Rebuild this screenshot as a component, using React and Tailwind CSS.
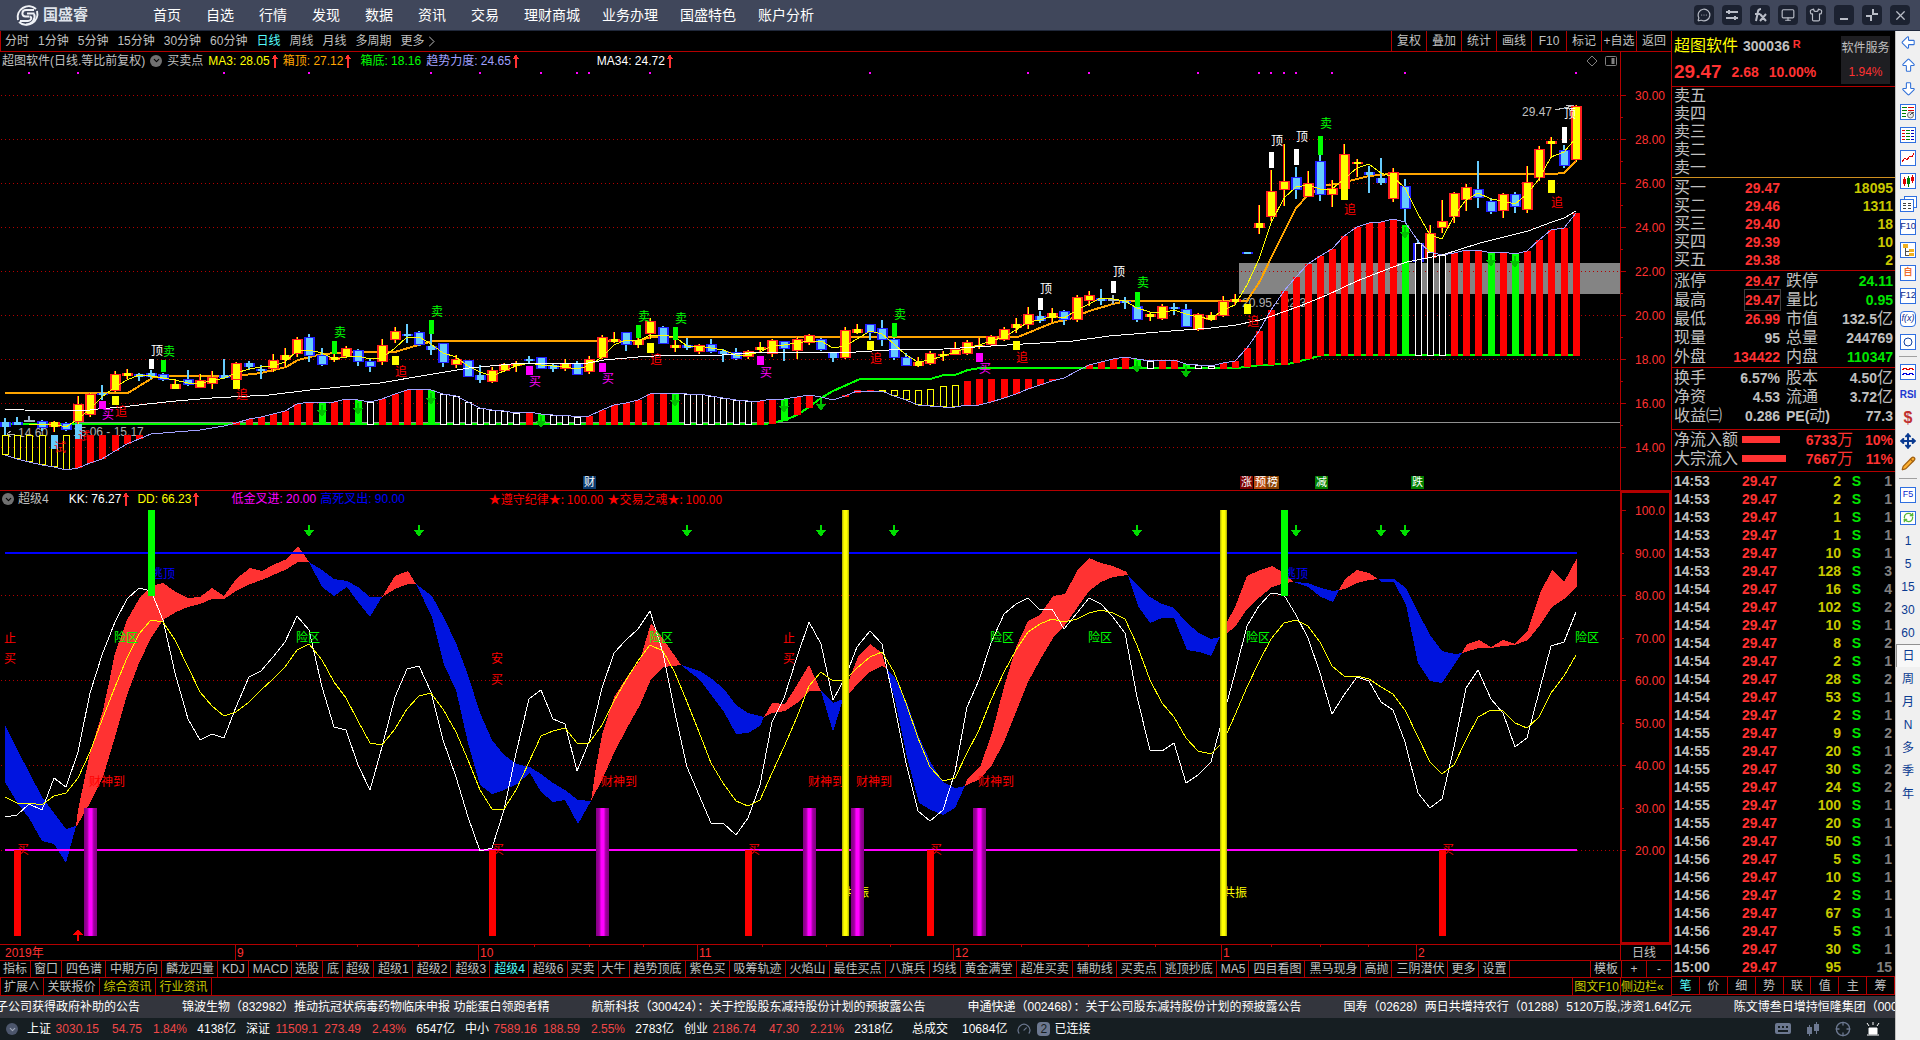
import React from 'react';
import {
  ArrowBigDown,
  ArrowBigLeft,
  ArrowBigUp,
  ChevronDown,
  ChevronRight,
  Crosshair,
  Gauge,
  MessageCircleMore,
  Monitor,
  Move,
  Pencil,
  RefreshCw,
  Shirt,
  X,
} from 'lucide-react';

const FONT = "font-['Liberation_Sans','Noto_Sans_CJK_SC',sans-serif]";
const STEP = 12.177;
const cx = (i) => Math.floor(5.5 + STEP * i);

// [kind, high, body top, body bottom, low]; r = up, b = down, g = flat
const CANDLES = [
  ['b', 418, 422, 427, 435], ['b', 417, 422, 425, 425], ['g', 416, 420, 421, 422], ['b', 420, 421, 428, 431],
  ['r', 421, 422, 427, 432], ['b', 422, 423, 430, 431], ['r', 396, 404, 422, 433], ['r', 393, 394, 415, 417],
  ['b', 385, 393, 394, 400], ['r', 371, 374, 391, 392], ['r', 369, 373, 376, 379], ['b', 373, 374, 377, 381],
  ['b', 370, 373, 377, 379], ['b', 373, 374, 380, 381], ['r', 379, 384, 389, 389], ['b', 370, 379, 385, 386],
  ['r', 374, 380, 388, 388], ['r', 371, 377, 384, 389], ['b', 359, 375, 378, 379], ['r', 362, 363, 380, 381],
  ['b', 361, 363, 367, 370], ['b', 365, 369, 371, 379], ['r', 354, 360, 369, 372], ['r', 348, 355, 360, 367],
  ['r', 337, 339, 354, 357], ['b', 334, 337, 356, 362], ['b', 348, 355, 365, 366], ['r', 354, 357, 360, 362],
  ['r', 346, 348, 357, 358], ['b', 349, 350, 362, 366], ['b', 359, 361, 367, 372], ['r', 339, 345, 362, 365],
  ['r', 327, 331, 340, 343], ['b', 324, 334, 336, 343], ['b', 331, 332, 345, 346], ['b', 334, 346, 350, 355],
  ['b', 343, 343, 363, 367], ['r', 355, 359, 365, 368], ['b', 360, 360, 377, 377], ['b', 365, 375, 380, 383],
  ['r', 367, 370, 382, 383], ['r', 363, 364, 371, 372], ['r', 361, 364, 366, 372], ['b', 356, 359, 361, 363],
  ['b', 357, 357, 369, 369], ['b', 363, 365, 369, 372], ['r', 359, 363, 369, 371], ['b', 361, 363, 375, 375],
  ['r', 356, 359, 372, 374], ['r', 335, 337, 358, 359], ['r', 332, 339, 342, 343], ['b', 332, 332, 345, 351],
  ['r', 338, 340, 345, 348], ['r', 318, 321, 334, 339], ['b', 326, 327, 344, 344], ['r', 338, 345, 348, 352],
  ['b', 338, 345, 348, 350], ['r', 344, 345, 352, 354], ['b', 339, 344, 352, 353], ['b', 349, 351, 354, 362],
  ['b', 348, 352, 359, 360], ['r', 350, 351, 357, 359], ['r', 342, 347, 350, 353], ['r', 339, 340, 354, 357],
  ['b', 341, 341, 349, 361], ['r', 337, 339, 351, 359], ['r', 334, 335, 343, 345], ['b', 338, 339, 350, 351],
  ['b', 352, 353, 358, 362], ['r', 327, 330, 358, 359], ['r', 324, 329, 333, 334], ['b', 324, 324, 333, 340],
  ['b', 320, 328, 340, 346], ['b', 338, 339, 358, 360], ['b', 353, 357, 366, 366], ['r', 357, 362, 366, 367],
  ['r', 351, 353, 364, 365], ['r', 351, 354, 355, 361], ['r', 342, 349, 355, 355], ['r', 340, 342, 354, 355],
  ['r', 338, 345, 347, 349], ['r', 335, 336, 345, 346], ['r', 327, 329, 340, 341], ['r', 318, 324, 328, 333],
  ['r', 307, 314, 325, 329], ['b', 311, 316, 321, 323], ['r', 308, 313, 318, 322], ['b', 310, 311, 320, 325],
  ['r', 295, 297, 320, 322], ['r', 291, 295, 301, 306], ['b', 289, 298, 301, 305], ['g', 295, 299, 301, 304],
  ['b', 297, 301, 302, 309], ['b', 305, 306, 320, 322], ['r', 312, 314, 317, 321], ['r', 304, 306, 319, 320],
  ['b', 303, 307, 309, 315], ['b', 304, 309, 327, 327], ['r', 313, 314, 330, 331], ['r', 312, 315, 320, 321],
  ['r', 296, 301, 316, 317], ['r', 294, 299, 302, 305], ['b', 252, 252, 254, 254], ['r', 205, 223, 228, 234],
  ['r', 170, 191, 217, 221], ['r', 144, 181, 190, 206], ['b', 167, 177, 190, 199], ['r', 171, 183, 197, 197],
  ['b', 155, 161, 195, 201], ['r', 180, 188, 195, 207], ['r', 144, 154, 189, 190], ['r', 159, 162, 164, 177],
  ['b', 166, 172, 175, 193], ['b', 158, 178, 183, 185], ['r', 168, 172, 199, 202], ['b', 179, 186, 209, 222],
  ['b', 240, 243, 262, 263], ['r', 225, 233, 258, 259], ['r', 200, 221, 228, 233], ['r', 192, 193, 217, 223],
  ['r', 184, 187, 200, 211], ['b', 161, 189, 198, 208], ['b', 198, 201, 212, 214], ['r', 193, 194, 211, 218],
  ['b', 192, 194, 207, 213], ['r', 166, 182, 210, 213], ['r', 146, 149, 178, 181], ['r', 137, 141, 144, 158],
  ['b', 145, 150, 166, 168], ['r', 105, 106, 160, 162],
];

// [first index, kind, [top, bottom] ...]; r = red, g = green, w = white outline, y = yellow outline
const HIST = [
  [0, 'y', [435, 455], [435, 459], [435, 462], [435, 465], [435, 467], [435, 470]],
  [6, 'r', [435, 468], [435, 463], [435, 459], [435, 451], [435, 444], [435, 439]],
  [19, 'r', [422, 425], [419, 425], [417, 425], [414, 425], [411, 425], [404, 425], [402, 425]],
  [26, 'g', [403, 425]],
  [27, 'r', [402, 425], [399, 425]],
  [29, 'g', [400, 425]],
  [30, 'w', [402, 425]],
  [31, 'r', [399, 425], [394, 425], [390, 425], [389, 425]],
  [35, 'g', [390, 425]],
  [36, 'w', [394, 425], [396, 425], [402, 425], [408, 425], [410, 425], [411, 425], [413, 425]],
  [43, 'r', [412, 425]],
  [44, 'g', [414, 425]],
  [45, 'w', [415, 425], [415, 425], [417, 425]],
  [48, 'r', [416, 425], [410, 425], [405, 425], [403, 425], [400, 425], [394, 425], [393, 425]],
  [55, 'g', [393, 425]],
  [56, 'w', [394, 425], [394, 425], [396, 425], [398, 425], [400, 425], [401, 425]],
  [62, 'r', [401, 425], [399, 424]],
  [64, 'g', [399, 421]],
  [65, 'r', [397, 415], [395, 408]],
  [69, 'r', [395, 397], [390, 393], [390, 392]],
  [72, 'y', [390, 392], [390, 396], [390, 400], [390, 405], [389, 406], [386, 407], [385, 407]],
  [79, 'r', [381, 405], [379, 405], [379, 402], [379, 398], [379, 394], [379, 389], [379, 385], [379, 381]],
  [89, 'r', [365, 369], [362, 369], [359, 369], [357, 369]],
  [93, 'g', [359, 369]],
  [94, 'w', [361, 369]],
  [95, 'r', [360, 369], [360, 369]],
  [97, 'g', [364, 369]],
  [98, 'w', [365, 369], [366, 369]],
  [100, 'r', [363, 369], [361, 368], [348, 367], [331, 365], [310, 365], [291, 365], [277, 363], [264, 359],
    [256, 356], [249, 356], [236, 356], [227, 356], [223, 356], [222, 356], [219, 356]],
  [115, 'g', [225, 356]],
  [116, 'w', [243, 356], [252, 356], [255, 356]],
  [119, 'r', [253, 356], [250, 356], [250, 356]],
  [122, 'g', [253, 356]],
  [123, 'r', [252, 356]],
  [124, 'g', [254, 356]],
  [125, 'r', [251, 356], [240, 356], [230, 356], [228, 356], [213, 356]],
];

const FORCE = [
  455, 459, 462, 465, 467, 470, 468, 463, 459, 451, 444, 439, 434, 433, 432, 431, 430, 428, 426, 423,
  419, 417, 414, 411, 404, 402, 403, 402, 399, 400, 402, 399, 394, 390, 389, 390, 394, 396, 402, 408,
  410, 411, 413, 412, 414, 415, 415, 417, 416, 410, 405, 403, 400, 394, 393, 393, 394, 394, 396, 398,
  400, 401, 401, 399, 399, 397, 395, 397, 400, 396, 391, 391, 391, 396, 400, 405, 406, 407, 407, 405,
  405, 402, 398, 394, 389, 385, 381, 378, 371, 365, 362, 359, 357, 359, 361, 360, 360, 364, 365, 366,
  363, 361, 348, 331, 310, 291, 277, 264, 256, 249, 236, 227, 223, 222, 219, 222, 241, 252, 255, 253,
  250, 250, 253, 252, 254, 251, 240, 230, 228, 213,
];

const KK = [
  817, 815, 804, 810, 778, 787, 752, 693, 655, 622, 599, 588, 591, 620, 673, 719, 740, 734, 738, 707,
  677, 671, 657, 642, 616, 630, 687, 727, 730, 765, 790, 747, 697, 669, 666, 692, 740, 777, 817, 851,
  848, 810, 753, 699, 690, 719, 724, 771, 742, 688, 653, 640, 629, 611, 653, 713, 767, 795, 823, 823,
  835, 818, 785, 722, 698, 657, 622, 644, 700, 678, 647, 631, 644, 703, 763, 811, 821, 810, 772, 707,
  680, 643, 614, 604, 598, 610, 609, 629, 613, 598, 604, 617, 633, 697, 750, 751, 743, 783, 775, 762,
  717, 673, 626, 606, 593, 595, 615, 638, 673, 714, 695, 677, 681, 702, 710, 742, 793, 808, 799, 747,
  688, 670, 699, 713, 747, 738, 692, 646, 642, 612,
];

const DD = [
  797, 803, 803, 805, 796, 793, 778, 752, 720, 687, 658, 634, 620, 622, 640, 667, 692, 706, 716, 712,
  702, 690, 679, 667, 650, 644, 660, 682, 698, 721, 743, 745, 729, 709, 696, 693, 709, 732, 760, 790,
  809, 809, 790, 762, 736, 731, 728, 743, 743, 725, 701, 680, 661, 645, 651, 673, 702, 732, 763, 783,
  801, 806, 800, 773, 747, 717, 686, 672, 681, 680, 668, 657, 652, 672, 703, 738, 767, 781, 778, 753,
  730, 700, 672, 650, 632, 624, 619, 622, 619, 613, 610, 613, 619, 645, 680, 703, 717, 738, 751, 754,
  742, 715, 687, 662, 639, 623, 620, 626, 642, 666, 676, 676, 679, 687, 694, 710, 737, 762, 774, 765,
  740, 717, 710, 711, 723, 728, 717, 693, 676, 655,
];

const RED_BANDS = [
  '76,826 78,810 90,753 103,710 108,687 115,653 127,620 139,599 151,586 163,583 176,592 188,598 200,597 212,588 224,596 236,579 250,568 262,571 273,565 287,559 298,546 309,562 298,562 287,569 262,580 250,584 236,591 224,599 212,599 200,604 188,607 176,612 163,620 151,638 139,663 127,695 115,737 103,777 90,803 78,824',
  '382,597 395,576 408,571 416,584 408,584 395,589',
  '591,801 596,767 602,735 614,697 627,677 640,660 651,623 664,640 681,665 664,667 651,679 640,705 627,728 614,753 602,780',
  '764,717 772,703 785,704 797,685 809,665 821,691 809,691 797,703 785,711 772,713',
  '843,699 850,677 858,657 870,644 882,653 886,668 882,666 870,672 858,683 850,693',
  '965,786 967,779 980,767 992,733 1004,687 1016,647 1028,621 1040,615 1053,596 1065,594 1077,571 1089,558 1101,563 1113,566 1127,572 1128,575 1113,577 1101,582 1089,591 1077,608 1065,625 1053,638 1040,660 1028,682 1016,712 1004,742 992,765 980,779',
  '1220,637 1227,622 1235,607 1247,576 1260,570 1272,566 1284,573 1294,582 1284,583 1272,587 1260,597 1247,609 1235,627 1227,633',
  '1339,590 1345,579 1357,570 1369,573 1378,579 1369,580 1357,583 1345,589',
  '1462,653 1467,644 1479,640 1491,647 1503,640 1515,644 1528,630 1540,593 1552,570 1564,582 1577,558 1577,586 1564,599 1552,607 1540,625 1528,640 1515,645 1503,646 1491,648 1479,648',
];

const BLUE_BANDS = [
  '5,725 18,751 29,772 42,797 54,813 66,829 76,826 66,863 54,844 42,841 29,818 18,804 5,782',
  '309,562 322,570 334,579 347,581 358,587 370,597 382,597 370,617 358,602 347,587 334,596 322,587',
  '416,584 432,596 444,618 456,643 468,675 480,713 492,740 504,755 517,764 530,767 541,774 553,783 565,790 578,800 591,801 578,824 565,800 553,802 541,792 530,773 517,784 504,790 492,794 480,785 468,743 456,690 444,665 432,617',
  '681,665 700,671 712,679 724,689 736,705 748,713 764,717 760,726 748,733 736,734 724,712 700,680',
  '821,691 833,703 843,699 833,732',
  '886,668 895,678 907,703 919,737 931,763 943,782 955,788 965,786 955,808 943,815 931,810 919,803 907,757 895,700',
  '1128,575 1138,586 1150,597 1162,604 1174,608 1187,623 1199,633 1211,639 1220,637 1211,656 1199,652 1187,650 1174,618 1162,618 1150,623 1138,606',
  '1294,582 1308,583 1321,588 1333,591 1339,590 1333,602 1321,597 1308,587',
  '1378,579 1394,579 1406,588 1418,612 1430,635 1442,651 1455,654 1462,653 1442,683 1430,681 1418,663 1406,605 1394,582 1382,582',
];

const BOX_LINE =
  '5,393 128,393 154,377 163,376 237,376 244,375 261,373 286,367 298,360 322,354 339,353 358,352 395,352 408,348 433,341 638,341 651,337 1018,337 1052,323 1073,318 1089,311 1113,304 1126,301 1247,301 1260,281 1272,256 1284,232 1296,208 1308,195 1327,185 1338,184 1345,182 1357,179 1369,176 1390,174 1553,174 1564,173 1576,161';
const MA34_LINE =
  '5,409 24,410 82,411 98,409 122,407 147,404 176,401 212,398 269,395 310,390 380,383 433,374 469,368 522,363 588,363 604,360 638,357 671,355 722,355 762,352 856,352 889,350 944,349 1007,345 1073,341 1109,336 1171,331 1211,328 1236,325 1260,320 1272,316 1300,306 1327,295 1357,281 1393,267 1407,262 1442,255 1480,243 1528,231 1552,222 1564,218 1576,211';
const FLOOR_LINE =
  '5,424 766,424 785,420 797,415 809,407 821,398 833,391 860,379 930,379 944,375 955,375 968,370 980,368 1236,368 1247,367 1260,365 1288,364 1308,359 1323,355 1576,355';

// [index, colour, top, bottom, label, label y, width]
const SIGNALS = [
  [12, '#ffffff', 359, 369, '顶', 351, 5], [85, '#ffffff', 298, 310, '顶', 289, 5], [91, '#ffffff', 281, 293, '顶', 272, 5],
  [104, '#ffffff', 152, 168, '顶', 141, 5], [106, '#ffffff', 149, 165, '顶', 137, 5], [128, '#ffffff', 127, 143, '顶', 114, 5],
  [13, '#00ff00', 360, 372, '卖', 352, 5], [27, '#00ff00', 341, 354, '卖', 333, 5], [35, '#00ff00', 320, 334, '卖', 312, 5],
  [52, '#00ff00', 325, 338, '卖', 317, 5], [55, '#00ff00', 327, 340, '卖', 319, 5], [73, '#00ff00', 323, 337, '卖', 315, 5],
  [93, '#00ff00', 292, 307, '卖', 283, 5], [108, '#00ff00', 136, 155, '卖', 124, 5],
  [8, '#ff00ff', 401, 409, '买', 415, 7], [43, '#ff00ff', 366, 375, '买', 382, 7], [49, '#ff00ff', 363, 372, '买', 379, 7],
  [62, '#ff00ff', 356, 365, '买', 373, 7], [80, '#ff00ff', 353, 362, '买', 369, 7],
  [9, '#ffff00', 396, 405, '追', 412, 7], [19, '#ffff00', 380, 389, '追', 395, 7], [32, '#ffff00', 356, 365, '追', 372, 7],
  [53, '#ffff00', 343, 353, '追', 360, 7], [71, '#ffff00', 341, 350, '追', 359, 7], [83, '#ffff00', 341, 350, '追', 358, 7],
  [102, '#ffff00', 304, 314, '追', 322, 7], [110, '#ffff00', 187, 200, '追', 210, 7], [127, '#ffff00', 180, 193, '追', 203, 7],
  [4, '#66ccff', 435, 449, '试', 448, 7], [6, '#66ccff', 424, 439, '试', 437, 7],
];
const LABEL_RED = ['追', '试'];

const DOTS = [2, 6, 18, 25, 35, 39, 44, 47, 48, 53, 71, 84, 89, 98, 103, 104, 105, 106, 109, 115, 129];
const TREND_ARROWS = [
  [26, 405], [29, 403], [35, 393], [44, 416], [55, 395], [64, 401], [67, 399], [93, 361], [97, 366], [115, 227], [122, 255], [124, 256],
];
const BADGES = [
  [583, '#0a3a6e', '财'], [1240, '#7a0000', '涨'], [1254, '#b84a10', '预'], [1266, '#8a4000', '榜'], [1315, '#008000', '减'], [1411, '#008000', '跌'],
];

const KIND_COLORS = { r: '#ff0000', g: '#00ff00', w: '#ffffff', y: '#ffff00' };

const series = (values) => values.map((v, i) => `${cx(i)},${v}`).join(' ');

const closes = CANDLES.map(([kind, , top, bottom]) => (kind === 'r' ? top : bottom));
const MA3 = closes
  .map((c, i) => (i < 2 ? null : `${cx(i)},${Math.round((c + closes[i - 1] + closes[i - 2]) / 3)}`))
  .filter(Boolean)
  .join(' ');

function Label({ x, y, fill, size = 12, anchor = 'start', children }) {
  return (
    <text x={x} y={y} fill={fill} fontSize={size} textAnchor={anchor} dominantBaseline="central">
      {children}
    </text>
  );
}

function Candle({ i, data }) {
  const [kind, high, top, bottom, low] = data;
  const x = cx(i);
  const h = Math.max(bottom - top, 2);
  if (kind === 'g') {
    return (
      <g fill="#9fb4c8">
        <rect x={x - 1} y={high} width="2" height={low - high} />
        <rect x={x - 5} y={top} width="11" height="2" />
      </g>
    );
  }
  const edge = kind === 'r' ? '#ff2020' : '#2020ff';
  const core = kind === 'r' ? '#ffff00' : '#66ccff';
  return (
    <g>
      <rect x={x - 1} y={high} width="1" height={low - high} fill={kind === 'r' ? '#ff2020' : core} />
      <rect x={x} y={high} width="1" height={low - high} fill={core} />
      <rect x={x - 5} y={top} width="11" height={h} fill={edge} />
      <rect x={x - 3} y={top + (h > 5 ? 1 : 0)} width="7" height={h > 5 ? h - 2 : h} fill={core} />
    </g>
  );
}

function DownArrow({ x, y, fill = '#00dd00' }) {
  return <path d={`M${x - 1} ${y}h2v5h4l-5 7l-5-7h4z`} fill={fill} />;
}

function Grid({ ys }) {
  return ys.map((y) => (
    <line key={y} x1="1" x2="1620" y1={y + 0.5} y2={y + 0.5} stroke="#b40000" strokeDasharray="1 3" />
  ));
}

function PriceChart() {
  return (
    <svg viewBox="0 69 1671 421" className="block h-auto w-full" shapeRendering="crispEdges">
      <rect x="1239" y="263" width="381" height="31" fill="#848484" />
      <Grid ys={[95, 139, 183, 227, 271, 315, 359, 403, 447]} />
      {DOTS.map((i) => (
        <rect key={i} x={cx(i) - 1} y="72" width="2" height="2" fill="#ff00ff" />
      ))}
      <line x1="75" x2="1620" y1="422.5" y2="422.5" stroke="#909090" />
      <g>
        <path d="M15 434H7m4-3l-4 3l4 3" stroke="#b0b0b0" fill="none" />
        <Label x={18} y={433} fill="#b0b0b0">14.60</Label>
        <Label x={73} y={432} fill="#b0b0b0">15.06 - 15.17</Label>
        <Label x={1242} y={303} fill="#b0b0b0">20.95 - 22.3</Label>
        <Label x={1522} y={112} fill="#c0c0c0">29.47</Label>
        <path d="M1555 110l18-4m-7-1h8m-5 5l5-4" stroke="#c0c0c0" fill="none" />
      </g>
      <polyline points={FLOOR_LINE} fill="none" stroke="#00ff00" strokeWidth="2" />
      <polyline points={BOX_LINE} fill="none" stroke="#ffa500" strokeWidth="2" />
      {CANDLES.map((c, i) => (
        <Candle key={i} i={i} data={c} />
      ))}
      <polyline points={MA3} fill="none" stroke="#ffff00" />
      {HIST.map(([start, kind, ...bars]) =>
        bars.map(([top, bottom], n) => {
          const x = cx(start + n) - 3;
          const color = KIND_COLORS[kind];
          return kind === 'r' || kind === 'g' ? (
            <rect key={x} x={x} y={top} width="7" height={bottom - top} fill={color} />
          ) : (
            <rect key={x} x={x + 0.5} y={top + 0.5} width="6" height={Math.max(bottom - top - 1, 1)} fill="#000" stroke={color} />
          );
        })
      )}
      <polyline points={series(FORCE)} fill="none" stroke="#a0a0ff" />
      <polyline points={MA34_LINE} fill="none" stroke="#ffffff" />
      {TREND_ARROWS.map(([i, y]) => (
        <DownArrow key={i} x={cx(i)} y={y} fill="#00c000" />
      ))}
      {SIGNALS.map(([i, color, top, bottom, text, ty, w]) => (
        <g key={`${text}${i}`}>
          <rect x={cx(i) - (w - 1) / 2} y={top} width={w} height={bottom - top} fill={color} />
          <Label x={cx(i)} y={ty} fill={LABEL_RED.includes(text) ? '#ff0000' : color}>{text}</Label>
        </g>
      ))}
      {BADGES.map(([x, color, text]) => (
        <g key={text}>
          <rect x={x} y="476" width="13" height="13" fill={color} />
          <Label x={x + 1} y={482} fill="#ffffff" size={11}>{text}</Label>
        </g>
      ))}
      <g stroke="#b40000">
        <line x1="1620.5" x2="1620.5" y1="69" y2="490" />
        {Array.from({ length: 17 }, (_, k) => (
          <line key={k} x1="1621" x2={k % 2 ? 1623 : 1626} y1={95.5 + k * 22} y2={95.5 + k * 22} />
        ))}
      </g>
      {[30, 28, 26, 24, 22, 20, 18, 16, 14].map((p, k) => (
        <Label key={p} x={1665} y={96 + k * 44} fill="#ff3232" anchor="end">{p.toFixed(2)}</Label>
      ))}
    </svg>
  );
}

const MONTHS = [[236, '9'], [479, '10'], [698, '11'], [954, '12'], [1222, '1'], [1417, '2']];
const WEEKS = [296, 357, 418, 534, 589, 643, 762, 826, 890, 1021, 1088, 1155, 1271, 1320, 1368];
const OSC_LABELS = ['100.0', '90.00', '80.00', '70.00', '60.00', '50.00', '40.00', '30.00', '20.00'];

function OscillatorChart() {
  return (
    <svg viewBox="0 504 1671 456" className="block h-auto w-full" shapeRendering="crispEdges">
      <defs>
        <linearGradient id="pillarMagenta">
          <stop offset="0" stopColor="#800080" />
          <stop offset="0.25" stopColor="#a000a0" />
          <stop offset="0.4" stopColor="#ff00ff" />
          <stop offset="0.6" stopColor="#ff00ff" />
          <stop offset="0.75" stopColor="#a000a0" />
          <stop offset="1" stopColor="#800080" />
        </linearGradient>
        <linearGradient id="pillarYellow">
          <stop offset="0" stopColor="#a8a800" />
          <stop offset="0.3" stopColor="#ffff00" />
          <stop offset="0.7" stopColor="#ffff00" />
          <stop offset="1" stopColor="#a8a800" />
        </linearGradient>
      </defs>
      <Grid ys={[595, 680, 765, 850]} />
      {RED_BANDS.map((p) => <polygon key={p} points={p} fill="#ff3232" />)}
      {BLUE_BANDS.map((p) => <polygon key={p} points={p} fill="#0014e0" />)}
      <rect x="5" y="552" width="1572" height="2" fill="#0000ff" />
      <rect x="5" y="849" width="1572" height="2" fill="#ff00ff" />
      <polyline points={series(KK)} fill="none" stroke="#ffffff" />
      <polyline points={series(DD)} fill="none" stroke="#ffff00" />
      {[12, 105].map((i) => <Label key={i} x={cx(i)} y={574} fill="#0000ff">逃顶</Label>)}
      {[9, 24, 53, 81, 89, 102, 129].map((i) => <Label key={i} x={cx(i) - 1} y={638} fill="#00ff00">险区</Label>)}
      {[[0, '止', 639], [0, '买', 659], [40, '安', 659], [40, '买', 680], [64, '止', 639], [64, '买', 659]].map(([i, t, y]) => (
        <Label key={`${i}${t}`} x={cx(i) - 1} y={y} fill="#ff0000">{t}</Label>
      ))}
      {[7, 49, 66, 70, 80].map((i) => <Label key={i} x={cx(i) - 1} y={782} fill="#ff0000">财神到</Label>)}
      {[69, 100].map((i) => <Label key={i} x={cx(i)} y={893} fill="#ffff00">共振</Label>)}
      {[1, 40, 61, 76, 118].map((i) => (
        <g key={i}>
          <Label x={cx(i)} y={850} fill="#ff0000">买</Label>
          <rect x={cx(i) - 3} y="850" width="7" height="86" fill="#ff0000" />
        </g>
      ))}
      {[69, 100].map((i) => <rect key={i} x={cx(i) - 3} y="510" width="7" height="426" fill="url(#pillarYellow)" />)}
      {[7, 49, 66, 70, 80].map((i) => <rect key={i} x={cx(i) - 6} y="808" width="13" height="128" fill="url(#pillarMagenta)" />)}
      {[12, 105].map((i) => <rect key={i} x={cx(i) - 3} y="510" width="7" height="86" fill="#00ff00" />)}
      {[25, 34, 56, 67, 73, 93, 106, 113, 115].map((i) => <DownArrow key={i} x={cx(i)} y={525} />)}
      <path d="M77 941h2v-6h4l-5-6l-5 6h4z" fill="#ff0000" />

      <path d="M1621 504V943H1670V504" fill="none" stroke="#b40000" strokeWidth="2" />
      {OSC_LABELS.map((t, k) => (
        <g key={t}>
          <line x1="1622" x2={k % 2 ? 1624 : 1626} y1={510.5 + k * 42.5} y2={510.5 + k * 42.5} stroke="#b40000" />
          <Label x={1665} y={Math.round(511 + k * 42.5)} fill="#ff3232" anchor="end">{t}</Label>
        </g>
      ))}

      <g stroke="#b40000">
        <line x1="0" x2="1671" y1="944.5" y2="944.5" />
        <line x1="1620.5" x2="1620.5" y1="944" y2="960" />
        {MONTHS.map(([x]) => <line key={x} x1={x - 0.5} x2={x - 0.5} y1="944" y2="960" />)}
        {WEEKS.map((x) => <line key={x} x1={x + 0.5} x2={x + 0.5} y1="944" y2="947" />)}
      </g>
      <Label x={5} y={953} fill="#ff3232">2019年</Label>
      {MONTHS.map(([x, t]) => <Label key={x} x={x + 1} y={953} fill="#ff3232">{t}</Label>)}
      <Label x={1632} y={953} fill="#c0c0c0">日线</Label>
    </svg>
  );
}

function UpMark() {
  return (
    <svg width="6" height="14" viewBox="0 0 6 14" shapeRendering="crispEdges" className="ml-0.5 inline-block shrink-0">
      <path d="M2 14V5H0l3-5l3 5H4v9z" fill="#ff3232" />
    </svg>
  );
}

function Toggle({ label }) {
  return (
    <button type="button" aria-label={label} className="flex size-3 items-center justify-center rounded-full bg-[#707070] text-black">
      <ChevronDown size={9} strokeWidth={3} />
    </button>
  );
}

const MENU = ['首页', '自选', '行情', '发现', '数据', '资讯', '交易', '理财商城', '业务办理', '国盛特色', '账户分析'];

const WINDOW_BUTTONS = [
  ['消息', <MessageCircleMore size={14} />],
  ['切换', <svg width="14" height="14" viewBox="0 0 14 14" stroke="currentColor" strokeWidth="2"><path d="M1 4h12M1 10h12M4 2v4M10 8v4" /></svg>],
  ['公式', <svg width="14" height="14" viewBox="0 0 14 14" fill="none" stroke="currentColor" strokeWidth="2"><path d="M8 1C5 1 5 3 4.500 6L3 13M2 6h5M7 6l6 7M13 6l-6 7" /></svg>],
  ['屏幕', <Monitor size={14} />],
  ['皮肤', <Shirt size={14} />],
  ['最小化', <svg width="12" height="12" viewBox="0 0 12 12" stroke="currentColor" strokeWidth="2"><path d="M2 10h8" /></svg>],
  ['还原', <svg width="14" height="14" viewBox="0 0 14 14" fill="none" stroke="currentColor" strokeWidth="2"><path d="M8 1v5h5M1 8h5v5" /></svg>],
  ['关闭', <X size={15} />],
];

function Header() {
  return (
    <header className="flex h-[31px] items-center border-b border-[#20283a] bg-[#40475b] pr-[10px] pl-[15px] text-white">
      <svg width="25" height="25" viewBox="0 0 25 25" fill="none" stroke="#f0f2f6" strokeWidth="2">
        <path d="M21 6A11 11 0 0 0 3 17M4 19A11 11 0 0 0 22 8" />
        <path d="M19 7H11C6.500 7 6 13.500 10.500 13.500H14.500" />
        <path d="M19.500 10.500H12M15 13.500C17.500 14.500 16 18 13 18H5" />
        <path d="M19 11C21 15 18 21 11 21.500" />
      </svg>
      <h1 className="ml-[3px] w-[110px] text-[15px] leading-5 font-bold text-[#dfe3ea]">国盛睿</h1>
      <nav className="flex text-sm leading-5">
        {MENU.map((m) => (
          <a key={m} href="#" className={m.length > 2 ? 'w-[78px]' : 'w-[53px]'}>{m}</a>
        ))}
      </nav>
      <div className="ml-auto flex gap-2">
        {WINDOW_BUTTONS.map(([name, icon]) => (
          <button key={name} type="button" aria-label={name} className="flex size-5 items-center justify-center rounded bg-[#1c2231] text-[#b8bcc6]">
            {icon}
          </button>
        ))}
      </div>
    </header>
  );
}

const PERIODS = ['分时', '1分钟', '5分钟', '15分钟', '30分钟', '60分钟', '日线', '周线', '月线', '多周期', '更多'];
const TOOLS = ['复权', '叠加', '统计', '画线', 'F10', '标记', '+自选', '返回'];

function PeriodBar() {
  return (
    <div className="flex h-[21px] items-stretch border-b border-l border-[#b40000] text-[#c0c0c0]">
      <div className="flex items-center gap-[9px] pl-1">
        {PERIODS.map((p) => (
          <button key={p} type="button" className={p === '日线' ? 'text-[#54fcfc]' : ''}>{p}</button>
        ))}
        <svg width="6" height="11" viewBox="0 0 6 11" fill="none" stroke="currentColor" className="-ml-[5px]">
          <path d="M0 0.500l5 5l-5 5" />
        </svg>
      </div>
      <div className="ml-auto flex">
        {TOOLS.map((t) => (
          <button key={t} type="button" className="w-[35px] border-l border-[#b40000] whitespace-nowrap">{t}</button>
        ))}
      </div>
    </div>
  );
}

function PriceHeading() {
  return (
    <div className="flex h-[17px] items-center">
      <div className="flex flex-1 items-center gap-[5px] pl-0.5 whitespace-nowrap">
        <span className="text-[#c0c0c0]">超图软件(日线.等比前复权)</span>
        <Toggle label="展开买卖点" />
        <span className="text-[#c0c0c0]">买卖点</span>
        <span className="flex items-center text-[#ffff00]">MA3: 28.05<UpMark /></span>
        <span className="flex items-center text-[#ffa500]">箱顶: 27.12<UpMark /></span>
        <span className="ml-1 text-[#00ff00]">箱底: 18.16</span>
        <span className="flex items-center text-[#a0a0ff]">趋势力度: 24.65<UpMark /></span>
        <span className="ml-[73px] flex items-center text-white">MA34: 24.72<UpMark /></span>
        <svg width="32" height="12" viewBox="0 0 32 12" fill="none" stroke="#808080" className="mr-[2px] ml-auto">
          <path d="M6 1l5 5l-5 5l-5-5z" />
          <rect x="19.500" y="1.500" width="11" height="9" rx="1" />
          <path d="M27 3v6" strokeWidth="3" />
        </svg>
      </div>
      <div className="h-full w-[51px] border-l border-[#b40000]" />
    </div>
  );
}

function OscillatorHeading() {
  return (
    <div className="flex h-[14px] items-start border-t border-[#b40000]">
      <div className="flex flex-1 items-center pl-0.5 whitespace-nowrap">
        <Toggle label="展开超级4" />
        <span className="ml-1 text-[#c0c0c0]">超级4</span>
        <span className="ml-5 flex items-center text-white">KK: 76.27<UpMark /></span>
        <span className="ml-2 flex items-center text-[#ffff00]">DD: 66.23<UpMark /></span>
        <span className="ml-8 text-[#ff00ff]">低金叉进: 20.00</span>
        <span className="ml-1 text-[#0000ff]">高死叉出: 90.00</span>
        <div className="ml-[84px] flex gap-1 font-['Noto_Sans_CJK_SC',sans-serif] text-[#ff0000]">
          <span>★遵守纪律★: 100.00</span>
          <span>★交易之魂★: 100.00</span>
        </div>
      </div>
      <div className="h-full w-[51px] border-t-2 border-r-2 border-l-2 border-[#b40000]" />
    </div>
  );
}

const TEMPLATES = [
  '指标', '窗口', '四色谱', '中期方向', '麟龙四量', 'KDJ', 'MACD', '选股', '底', '超级', '超级1', '超级2', '超级3', '超级4', '超级6',
  '买卖', '大牛', '趋势顶底', '紫色买', '吸筹轨迹', '火焰山', '最佳买点', '八旗兵', '均线', '黄金满堂', '超准买卖', '辅助线', '买卖点',
  '逃顶抄底', 'MA5', '四目看图', '黑马现身', '高抛', '三阴潜伏', '更多', '设置',
];

function BottomTabs() {
  return (
    <div className="text-[#c0c0c0]">
      <div className="flex h-[17px] overflow-hidden border-t border-[#b40000] whitespace-nowrap">
        {TEMPLATES.map((t) => (
          <button
            key={t}
            type="button"
            className={`shrink-0 border-r border-[#b40000] ${t.length === 2 ? 'w-[31px]' : 'pr-[3px] pl-1'} ${t === '超级4' ? 'text-[#54fcfc]' : ''}`}
          >
            {t}
          </button>
        ))}
        <div className="ml-auto flex">
          <button type="button" className="w-[31px] border-l border-[#b40000]">模板</button>
          <button type="button" aria-label="放大" className="w-[25px] border-l border-[#b40000]">+</button>
          <button type="button" aria-label="缩小" className="w-[25px] border-l border-[#b40000]">-</button>
        </div>
      </div>
      <div className="flex h-[19px] border-y border-l border-[#b40000] whitespace-nowrap">
        <button type="button" className="w-[43px] border-r border-[#b40000]">扩展∧</button>
        <button type="button" className="w-14 border-r border-[#b40000]">关联报价</button>
        <button type="button" className="w-14 border-r border-[#b40000] text-[#c8c800]">综合资讯</button>
        <button type="button" className="w-14 border-r border-[#b40000] text-[#c8c800]">行业资讯</button>
        <div className="ml-auto flex text-[#c8c800]">
          <button type="button" className="w-12 border-l border-[#b40000]">图文F10</button>
          <button type="button" className="w-[51px] border-l border-[#b40000] text-left">侧边栏<span aria-hidden="true">«</span></button>
        </div>
      </div>
    </div>
  );
}

const BUYS = [['买一', '29.47', '18095'], ['买二', '29.46', '1311'], ['买三', '29.40', '18'], ['买四', '29.39', '10'], ['买五', '29.38', '2']];
const STATS = [
  ['涨停', '29.47', 'text-[#ff3232]', '跌停', '24.11', 'text-[#00e600]'],
  ['最高', '29.47', 'text-[#ff3232]', '量比', '0.95', 'text-[#00e600]'],
  ['最低', '26.99', 'text-[#ff3232]', '市值', '132.5亿', ''],
  ['现量', '95', '', '总量', '244769', ''],
  ['外盘', '134422', 'text-[#ff3232]', '内盘', '110347', 'text-[#00e600]'],
];
const RATIOS = [
  ['换手', '6.57%', '', '股本', '4.50亿', ''],
  ['净资', '4.53', '', '流通', '3.72亿', ''],
  ['收益㈢', '0.286', '', 'PE(动)', '77.3', ''],
];

const TRADES = [
  ['14:53', 2, 1], ['14:53', 2, 1], ['14:53', 1, 1], ['14:53', 1, 1], ['14:53', 10, 1], ['14:53', 128, 3],
  ['14:54', 16, 4], ['14:54', 102, 2], ['14:54', 10, 1], ['14:54', 8, 2], ['14:54', 2, 1], ['14:54', 28, 2],
  ['14:54', 53, 1], ['14:54', 2, 1], ['14:55', 9, 2], ['14:55', 20, 1], ['14:55', 30, 2], ['14:55', 24, 2],
  ['14:55', 100, 1], ['14:55', 20, 1], ['14:56', 50, 1], ['14:56', 5, 1], ['14:56', 10, 1], ['14:56', 2, 1],
  ['14:56', 67, 1], ['14:56', 5, 1], ['14:56', 30, 1], ['15:00', 95, 15],
];

function NumberText({ children }) {
  const [, digits, unit] = children.match(/^([\d.%]+)(.*)$/);
  return (
    <>
      <span className="text-sm font-bold">{digits}</span>
      {unit}
    </>
  );
}

function StatRows({ rows }) {
  return rows.map(([a, av, ac, b, bv, bc]) => (
    <div key={a} className="flex h-[19px] items-center whitespace-nowrap">
      <span>{a}</span>
      <span className={`ml-auto ${ac} ${a === '最高' ? 'outline outline-[#404040]' : ''}`}><NumberText>{av}</NumberText></span>
      <div className="ml-[6px] flex w-[107px] items-center">
        {b.startsWith('PE') ? <span><span className="text-sm font-bold">PE(</span>动<span className="text-sm font-bold">)</span></span> : <span>{b}</span>}
        <span className={`ml-auto ${bc}`}><NumberText>{bv}</NumberText></span>
      </div>
    </div>
  ));
}

function QuotePanel() {
  return (
    <aside className="flex w-[224px] shrink-0 flex-col border-l border-[#b40000] text-base leading-[18px] text-[#c0c0c0]">
      <div className="flex h-[56px] justify-between border-b border-[#b40000] pt-[5px] pr-[5px] pl-0.5">
        <div>
          <div className="flex items-center">
            <span className="text-[#ffff00]">超图软件</span>
            <span className="ml-[5px] text-sm font-bold">300036</span>
            <span className="mb-1 ml-[3px] text-[11px] leading-3 font-bold text-[#ff3232]">R</span>
          </div>
          <div className="mt-[5px] flex items-center gap-[10px] text-sm leading-[22px] font-bold text-[#ff3232]">
            <span className="text-[19px]">29.47</span>
            <span>2.68</span>
            <span>10.00%</span>
          </div>
        </div>
        <div className="flex h-12 w-[49px] flex-col items-center justify-around bg-[#1e1e22] text-xs">
          <span>软件服务</span>
          <span className="text-[#ff3232]">1.94%</span>
        </div>
      </div>
      <div className="border-b border-[#d09020] pl-0.5">
        {['卖五', '卖四', '卖三', '卖二', '卖一'].map((s) => <div key={s}>{s}</div>)}
      </div>
      <div className="border-b border-[#b40000] py-px pr-[2px] pl-0.5">
        {BUYS.map(([name, price, vol]) => (
          <div key={name} className="flex">
            <span>{name}</span>
            <span className="ml-auto text-sm leading-[18px] font-bold text-[#ff3232]">{price}</span>
            <span className="w-[113px] text-right text-sm leading-[18px] font-bold text-[#c8c800]">{vol}</span>
          </div>
        ))}
      </div>
      <div className="border-b border-[#b40000] pr-[2px] pb-px pl-0.5"><StatRows rows={STATS} /></div>
      <div className="border-b border-[#b40000] pr-[2px] pb-1 pl-0.5"><StatRows rows={RATIOS} /></div>
      <div className="border-b border-[#b40000] pr-[2px] pb-[3px] pl-0.5 text-[#ff3232]">
        {[['净流入额', 'w-[38px]', '6733万', '10%'], ['大宗流入', 'w-11', '7667万', '11%']].map(([name, bar, v, pct]) => (
          <div key={name} className="flex h-[19px] items-center">
            <span className="text-[#c0c0c0]">{name}</span>
            <span className={`ml-1 h-[7px] bg-[#ff3232] ${bar}`} />
            <span className="ml-auto"><NumberText>{v}</NumberText></span>
            <span className="w-10 text-right text-sm font-bold">{pct}</span>
          </div>
        ))}
      </div>
      <table className="w-full text-sm leading-[18px] font-bold">
        <tbody>
          {TRADES.map(([time, vol, count], n) => (
            <tr key={n} className="h-[18px]">
              <td className="p-0 pl-0.5">{time}</td>
              <td className="w-[67px] p-0 text-right text-[#ff3232]">29.47</td>
              <td className="w-16 p-0 text-right text-[#c8c800]">{vol}</td>
              <td className="w-[31px] p-0 text-center text-[#00e600]">{time === '15:00' ? '' : 'S'}</td>
              <td className="w-[23px] p-0 pr-[3px] text-right text-[#808080]">{count}</td>
            </tr>
          ))}
        </tbody>
      </table>
      <div className="grid h-[19px] grid-cols-8 border-y border-[#b40000] text-xs">
        {['笔', '价', '细', '势', '联', '值', '主', '筹'].map((t) => (
          <button key={t} type="button" className={`border-r border-[#b40000] ${t === '笔' ? 'text-[#54fcfc]' : ''}`}>{t}</button>
        ))}
      </div>
    </aside>
  );
}

const NEWS = [
  '锦波生物（832982）推动抗冠状病毒药物临床申报 功能蛋白领跑者精',
  '航新科技（300424）：关于控股股东减持股份计划的预披露公告',
  '申通快递（002468）：关于公司股东减持股份计划的预披露公告',
  '国寿（02628）两日共增持农行（01288）5120万股,涉资1.64亿元',
  '陈文博叁日增持恒隆集团（0001',
];

function Ticker() {
  return (
    <div className="flex h-[22px] items-center gap-[42px] overflow-hidden bg-[#33353d] whitespace-nowrap text-white">
      <a href="#" className="-ml-1 shrink-0">子公司获得政府补助的公告</a>
      {NEWS.map((n) => <a key={n} href="#" className="shrink-0">{n}</a>)}
    </div>
  );
}

const INDEXES = [
  ['上证', '3030.15', '54.75', '1.84%', '4138亿'],
  ['深证', '11509.1', '273.49', '2.43%', '6547亿'],
  ['中小', '7589.16', '188.59', '2.55%', '2783亿'],
  ['创业', '2186.74', '47.30', '2.21%', '2318亿'],
];

function StatusBar() {
  return (
    <footer className="flex h-[22px] items-center bg-[#161e22] pl-[6px] whitespace-nowrap text-white">
      <button type="button" aria-label="展开指数" className="mr-[9px] flex size-3 items-center justify-center rounded-full bg-[#4c566c] text-[#a0a8b8]">
        <ChevronDown size={9} strokeWidth={3} />
      </button>
      {INDEXES.map(([name, value, diff, pct, amount]) => (
        <div key={name} className="flex w-[219px] text-right">
          <span className="w-[26px] text-left">{name}</span>
          <span className="w-[46px] text-[#f04848]">{value}</span>
          <span className="w-[43px] text-[#f04848]">{diff}</span>
          <span className="w-[45px] text-[#f04848]">{pct}</span>
          <span className="w-[49px]">{amount}</span>
        </div>
      ))}
      <span className="ml-[9px]">总成交</span>
      <span className="ml-[14px]">10684亿</span>
      <Gauge size={14} className="ml-[10px] text-[#6c7890]" />
      <span className="ml-[6px] w-[13px] rounded-sm bg-[#6c7890] text-center leading-[14px] text-[#161e22]">2</span>
      <span className="ml-1">已连接</span>
      <div className="ml-auto flex items-center gap-[14px] pr-[14px] text-[#6c7890]">
        <svg width="16" height="12" viewBox="0 0 16 12">
          <rect width="16" height="11" rx="2" fill="currentColor" />
          <path d="M3 4h2M7 4h2M11 4h2M3 8h10" stroke="#161e22" strokeWidth="2" />
        </svg>
        <svg width="16" height="16" viewBox="0 0 16 16" fill="currentColor">
          <path d="M4 4h1v2h2v7H5v2H4v-2H2V6h2zM11 1h1v2h2v7h-2v3h-1v-3H9V3h2z" />
        </svg>
        <Crosshair size={16} />
        <svg width="16" height="16" viewBox="0 0 16 16" fill="#fff" stroke="#fff">
          <path d="M4 7h8v6H4zM2 14h12M8 1v3M2 2l2 3M14 2l-2 3" />
        </svg>
      </div>
    </footer>
  );
}

function Frame({ children }) {
  return (
    <svg width="16" height="16" viewBox="0 0 16 16" fill="none" shapeRendering="crispEdges">
      <rect x="0.500" y="0.500" width="15" height="15" fill="#fff" stroke="#2f6fe0" />
      {children}
    </svg>
  );
}

function FrameText({ children, className }) {
  return <span className={`flex size-4 items-center justify-center border border-[#2f6fe0] bg-white text-[9px] leading-none ${className}`}>{children}</span>;
}

const VIEW_TOOLS = [
  ['后退', <ArrowBigLeft size={17} strokeWidth={1.500} fill="#fff" />],
  ['上移', <ArrowBigUp size={17} strokeWidth={1.500} fill="#fff" />],
  ['下移', <ArrowBigDown size={17} strokeWidth={1.500} fill="#fff" />],
  ['自选设置', <Frame><path d="M2 3.500h5M2 6.500h5M2 9.500h4M2 12.500h4" stroke="#008000" /><path d="M8 3.500h6M8 6.500h6" stroke="#e00000" /><circle cx="10.500" cy="11" r="3" stroke="#707070" fill="#e8e8e8" shapeRendering="auto" /><path d="M10 11l4-3" stroke="#505050" /></Frame>],
  ['报价', <Frame><path d="M2 3.500h3M2 6.500h3M2 9.500h3M2 12.500h3" stroke="#e00000" /><path d="M6 3.500h4M6 6.500h4M6 9.500h4M6 12.500h4" stroke="#008000" /><path d="M11 3.500h3M11 6.500h3M11 9.500h3M11 12.500h3" stroke="#0000c0" /></Frame>],
  ['走势', <Frame><path d="M2 12l3-4l2 2l3-4l2 1l2-4" stroke="#e00000" strokeWidth="1" /></Frame>],
  ['K线', <Frame><path d="M4 4v9M12 2v8" stroke="#e00000" /><path d="M3 6h3v5H3zM11 4h3v4h-3z" fill="#e00000" /><path d="M8 3v11" stroke="#008000" /><path d="M7 5h3v6H7z" fill="#008000" /></Frame>],
  ['资讯', (
    <svg width="17" height="16" viewBox="0 0 17 16" fill="#fff" stroke="#2f6fe0" shapeRendering="crispEdges">
      <rect x="4.500" y="0.500" width="12" height="11" />
      <rect x="0.500" y="3.500" width="13" height="12" />
      <path d="M3 7.500h3M3 9.500h3M3 12.500h3M8 7.500h3M8 9.500h3M8 12.500h3" stroke="#404040" />
    </svg>
  )],
  ['F10', <FrameText className="text-[#0a2a90]">F10</FrameText>],
  ['板块', <Frame><path d="M5 5v8h5M5 9h5" stroke="#505050" /><path d="M3 2h5v4H3zM9 7h5v3H9zM9 11h5v3H9z" fill="#f0b020" /></Frame>],
  ['自选', <FrameText className="font-bold text-[#f07030]">自</FrameText>],
  ['F12', <FrameText className="text-[#0a2a90]">F12</FrameText>],
  ['公式', <FrameText className="rounded-sm text-[#0a2a90] italic">f(x)</FrameText>],
  ['圆', <Frame><circle cx="8" cy="8" r="4" stroke="#1040a0" shapeRendering="auto" /></Frame>],
];

const DRAW_TOOLS = [
  ['叠加指标', <Frame><path d="M2 6l3-2l3 2l3-2l3 2" stroke="#e00000" /><path d="M2 11l3-2l3 2l3-2l3 2" stroke="#0000e0" /></Frame>],
  ['RSI', <span className="text-[10px] leading-none font-bold text-[#2038d0]">RSI</span>],
  ['资金', <span className="text-base leading-none font-black text-[#c03030]">$</span>],
  ['移动', <Move size={16} strokeWidth={3} />],
  ['画线', <Pencil size={15} className="text-[#a06010]" fill="#ffb030" />],
];

const CYCLES = ['1', '5', '15', '30', '60', '日', '周', '月', 'N', '多', '季', '年'];

function SideTools() {
  const cell = 'flex h-[23px] items-center justify-center';
  return (
    <div className="flex w-[25px] shrink-0 flex-col border-l border-[#c0c0c0] bg-[#f0f0f0] text-xs text-[#0a3a90]">
      {VIEW_TOOLS.map(([name, icon]) => (
        <button key={name} type="button" aria-label={name} className={`${cell} text-[#3070d8]`}>{icon}</button>
      ))}
      <hr className="mx-[3px] my-[3px] border-[#a0a0a0]" />
      {DRAW_TOOLS.map(([name, icon]) => (
        <button key={name} type="button" aria-label={name} className={cell}>{icon}</button>
      ))}
      <hr className="mx-[3px] mt-[3px] mb-1 border-[#a0a0a0]" />
      <button type="button" aria-label="F5" className={cell}><FrameText className="text-[#0a2ad0]">F5</FrameText></button>
      <button type="button" aria-label="刷新" className={cell}>
        <span className="flex h-[14px] w-4 items-center justify-center border border-[#2f6fe0] bg-white">
          <RefreshCw size={11} strokeWidth={3} className="text-[#58b838]" />
        </span>
      </button>
      {CYCLES.map((c) => (
        <button key={c} type="button" className={`${cell} ${c === '日' ? 'border-t border-l border-[#909090] bg-[#f8f8f8]' : ''}`}>{c}</button>
      ))}
    </div>
  );
}

export default function App() {
  return (
    <div className={`min-h-screen bg-black text-xs leading-4 ${FONT}`}>
      <Header />
      <div className="flex">
        <div className="min-w-0 flex-1">
          <div className="flex">
            <main className="min-w-0 flex-1">
              <PeriodBar />
              <PriceHeading />
              <PriceChart />
              <OscillatorHeading />
              <OscillatorChart />
              <BottomTabs />
            </main>
            <QuotePanel />
          </div>
          <Ticker />
          <StatusBar />
        </div>
        <SideTools />
      </div>
    </div>
  );
}
